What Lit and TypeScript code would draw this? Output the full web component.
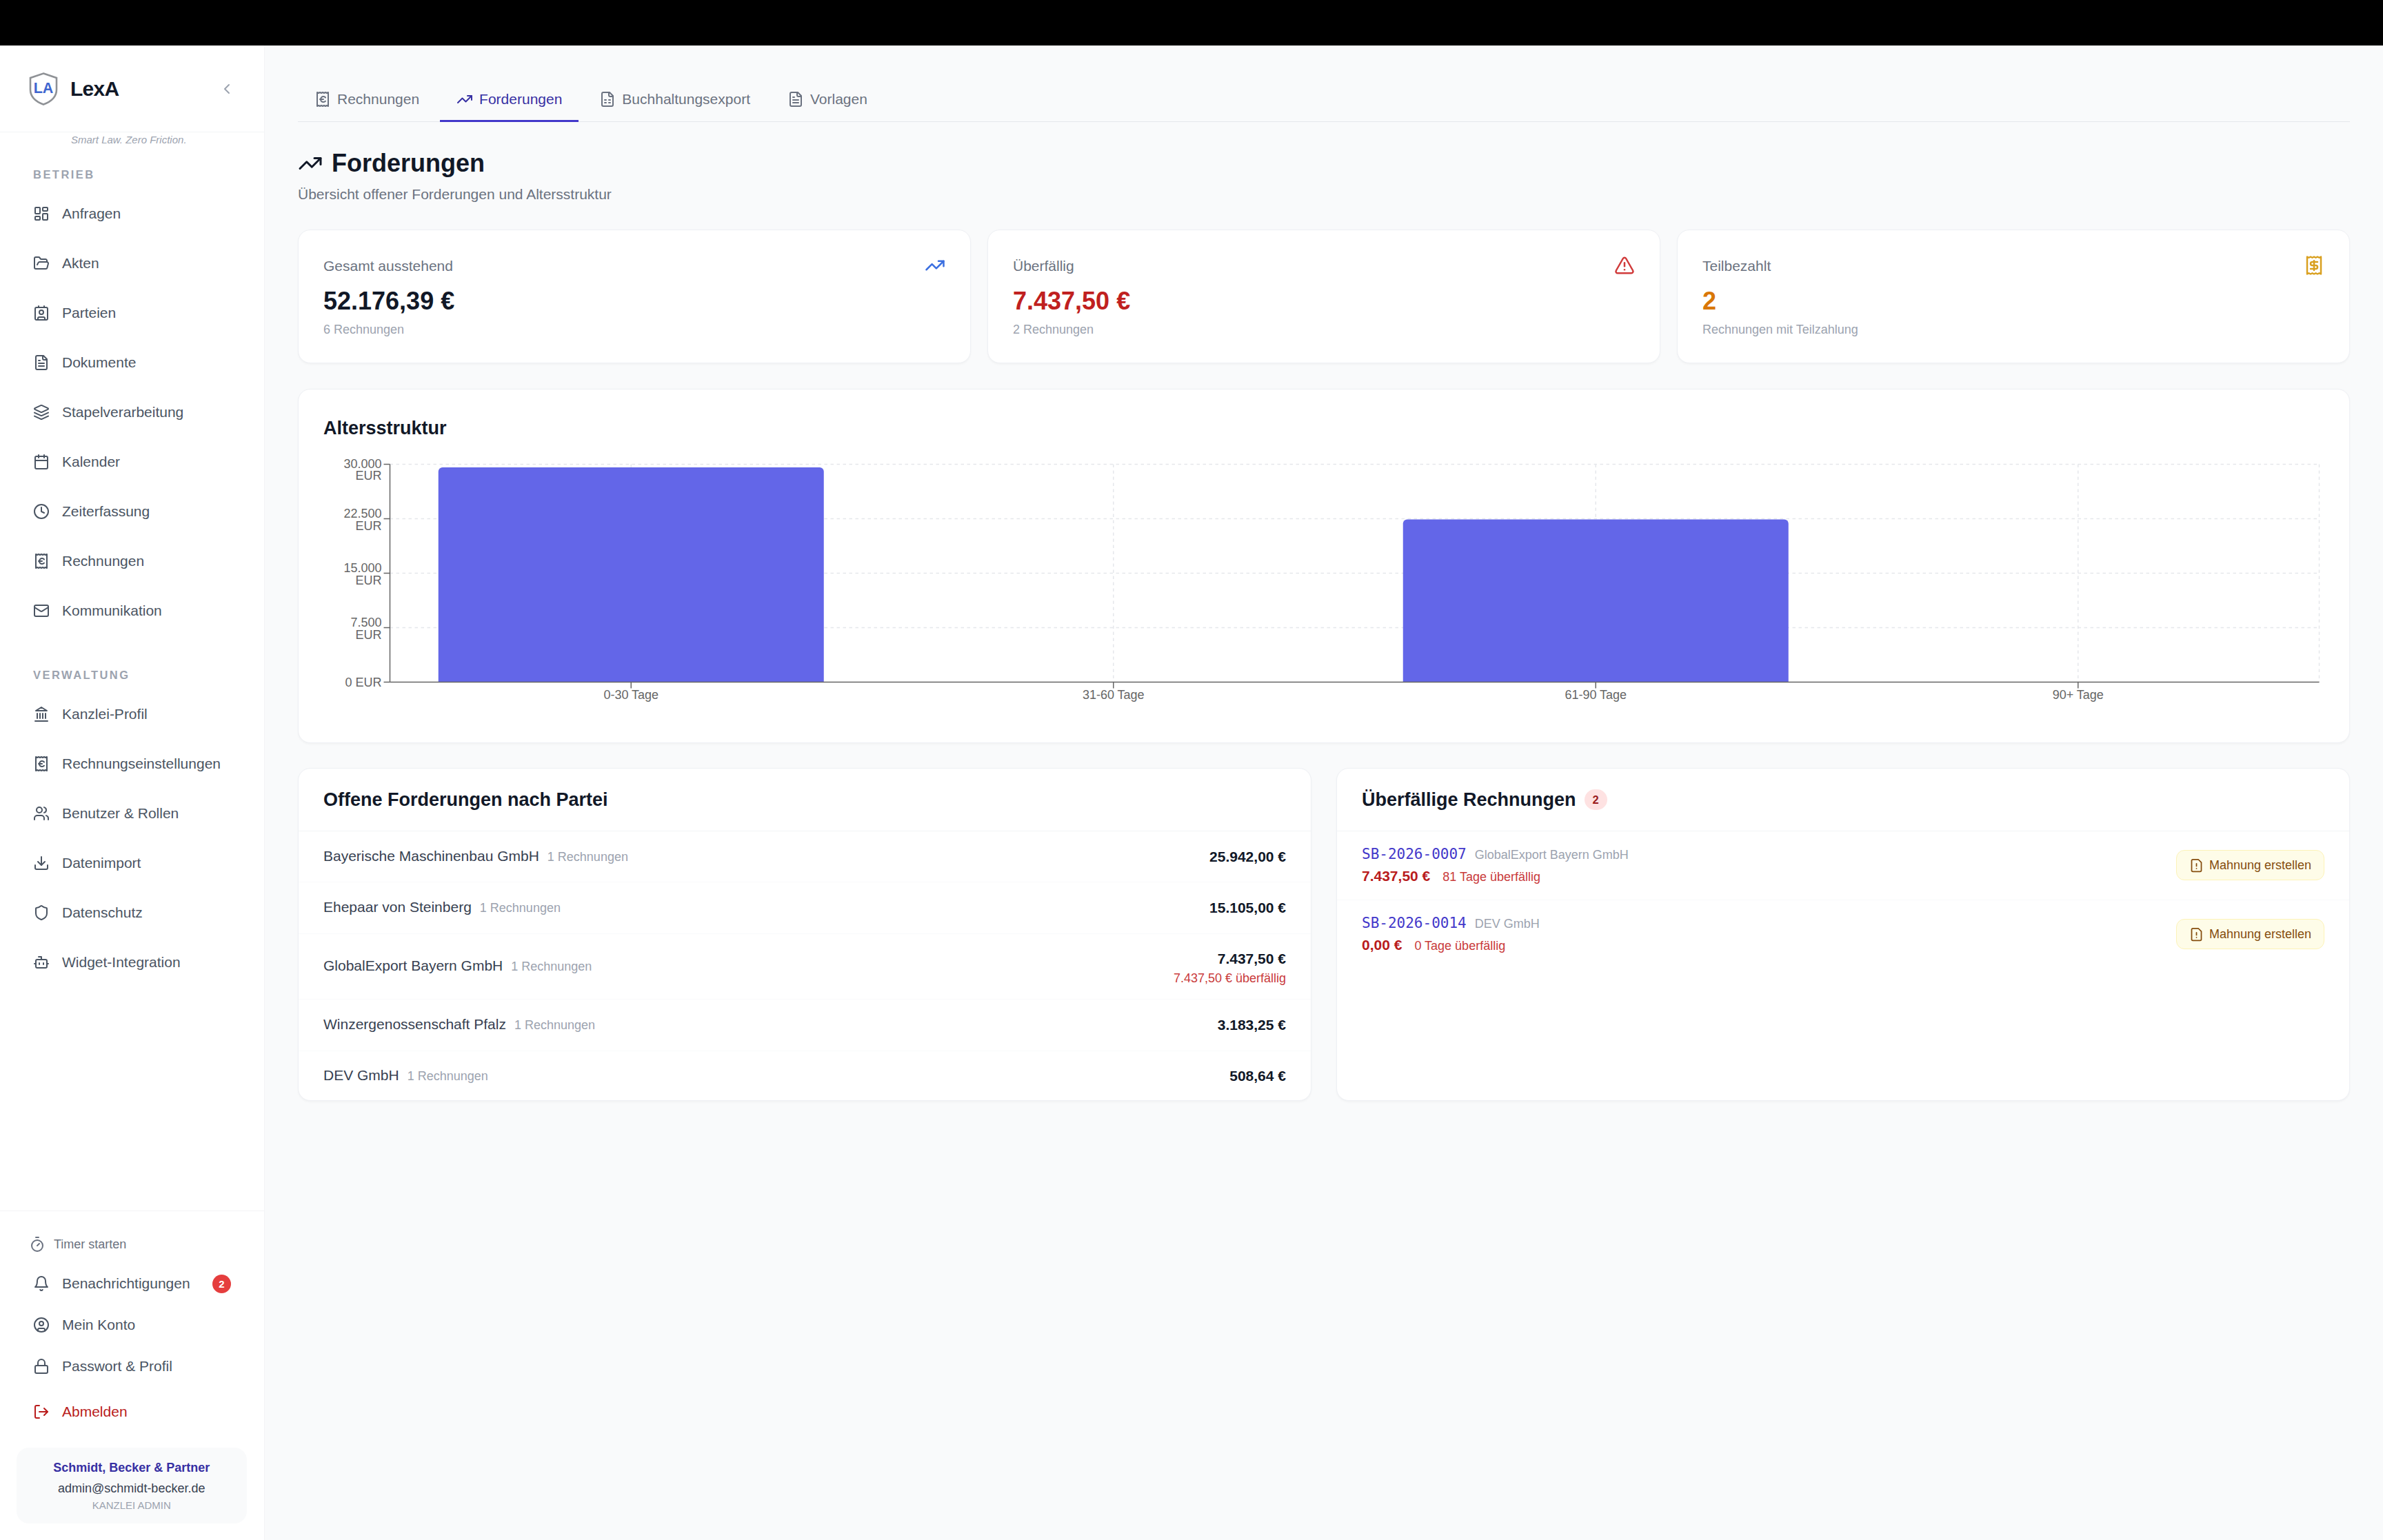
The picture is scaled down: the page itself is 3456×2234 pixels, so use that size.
import { LitElement, html, css, svg } from "lit";
import { customElement } from "lit/decorators.js";

const FILE = "M15 2H6a2 2 0 0 0-2 2v16a2 2 0 0 0 2 2h12a2 2 0 0 0 2-2V7Z";
const FOLD = "M14 2v4a2 2 0 0 0 2 2h4";
const RECEIPT = "M4 2v20l2-1 2 1 2-1 2 1 2-1 2 1 2-1 2 1V2l-2 1-2-1-2 1-2-1-2 1-2-1-2 1Z";

const ICONS: Record<string, unknown> = {
  dashboard: svg`<rect x="3" y="3" width="7" height="9" rx="1"/><rect x="14" y="3" width="7" height="5" rx="1"/><rect x="14" y="12" width="7" height="9" rx="1"/><rect x="3" y="16" width="7" height="5" rx="1"/>`,
  folder: svg`<path d="m6 14 1.5-2.9A2 2 0 0 1 9.24 10H20a2 2 0 0 1 1.94 2.5l-1.54 6a2 2 0 0 1-1.95 1.5H4a2 2 0 0 1-2-2V5a2 2 0 0 1 2-2h3.9a2 2 0 0 1 1.69.9l.81 1.2a2 2 0 0 0 1.67.9H18a2 2 0 0 1 2 2v2"/>`,
  contact: svg`<path d="M16 2v2"/><path d="M7 22v-2a2 2 0 0 1 2-2h6a2 2 0 0 1 2 2v2"/><path d="M8 2v2"/><circle cx="12" cy="11" r="3"/><rect x="3" y="4" width="18" height="18" rx="2"/>`,
  file: svg`<path d="${FILE}"/><path d="${FOLD}"/><path d="M10 9H8"/><path d="M16 13H8"/><path d="M16 17H8"/>`,
  layers: svg`<path d="m12.83 2.18a2 2 0 0 0-1.66 0L2.6 6.08a1 1 0 0 0 0 1.83l8.58 3.91a2 2 0 0 0 1.66 0l8.58-3.9a1 1 0 0 0 0-1.83Z"/><path d="m22 17.65-9.17 4.16a2 2 0 0 1-1.66 0L2 17.65"/><path d="m22 12.65-9.17 4.16a2 2 0 0 1-1.66 0L2 12.65"/>`,
  calendar: svg`<path d="M8 2v4"/><path d="M16 2v4"/><rect x="3" y="4" width="18" height="18" rx="2"/><path d="M3 10h18"/>`,
  clock: svg`<circle cx="12" cy="12" r="10"/><polyline points="12 6 12 12 16 14"/>`,
  receiptEuro: svg`<path d="${RECEIPT}"/><path d="M8 12h5"/><path d="M16 9.5a4 4 0 1 0 0 5.2"/>`,
  mail: svg`<rect x="2" y="4" width="20" height="16" rx="2"/><path d="m22 7-8.97 5.7a1.94 1.94 0 0 1-2.06 0L2 7"/>`,
  landmark: svg`<line x1="3" y1="22" x2="21" y2="22"/><line x1="6" y1="18" x2="6" y2="11"/><line x1="10" y1="18" x2="10" y2="11"/><line x1="14" y1="18" x2="14" y2="11"/><line x1="18" y1="18" x2="18" y2="11"/><polygon points="12 2 20 7 4 7"/>`,
  users: svg`<path d="M16 21v-2a4 4 0 0 0-4-4H6a4 4 0 0 0-4 4v2"/><circle cx="9" cy="7" r="4"/><path d="M22 21v-2a4 4 0 0 0-3-3.87"/><path d="M16 3.13a4 4 0 0 1 0 7.75"/>`,
  download: svg`<path d="M21 15v4a2 2 0 0 1-2 2H5a2 2 0 0 1-2-2v-4"/><polyline points="7 10 12 15 17 10"/><line x1="12" y1="15" x2="12" y2="3"/>`,
  shield: svg`<path d="M20 13c0 5-3.5 7.5-7.66 8.95a1 1 0 0 1-.67-.01C7.5 20.5 4 18 4 13V6a1 1 0 0 1 1-1c2 0 4.5-1.2 6.24-2.72a1.17 1.17 0 0 1 1.52 0C14.51 3.81 17 5 19 5a1 1 0 0 1 1 1z"/>`,
  bot: svg`<path d="M12 8V4H8"/><rect x="4" y="8" width="16" height="12" rx="2"/><path d="M2 14h2"/><path d="M20 14h2"/><path d="M15 13v2"/><path d="M9 13v2"/>`,
  bell: svg`<path d="M6 8a6 6 0 0 1 12 0c0 7 3 9 3 9H3s3-2 3-9"/><path d="M10.3 21a1.94 1.94 0 0 0 3.4 0"/>`,
  user: svg`<circle cx="12" cy="12" r="10"/><circle cx="12" cy="10" r="3"/><path d="M7 20.662V19a2 2 0 0 1 2-2h6a2 2 0 0 1 2 2v1.662"/>`,
  lock: svg`<rect x="3" y="11" width="18" height="11" rx="2"/><path d="M7 11V7a5 5 0 0 1 10 0v4"/>`,
  logout: svg`<path d="M9 21H5a2 2 0 0 1-2-2V5a2 2 0 0 1 2-2h4"/><polyline points="16 17 21 12 16 7"/><line x1="21" y1="12" x2="9" y2="12"/>`,
  timer: svg`<line x1="10" y1="2" x2="14" y2="2"/><line x1="12" y1="14" x2="15" y2="11"/><circle cx="12" cy="14" r="8"/>`,
  trend: svg`<polyline points="22 7 13.5 15.5 8.5 10.5 2 17"/><polyline points="16 7 22 7 22 13"/>`,
  alert: svg`<path d="m21.73 18-8-14a2 2 0 0 0-3.48 0l-8 14A2 2 0 0 0 4 21h16a2 2 0 0 0 1.73-3"/><path d="M12 9v4"/><path d="M12 17h.01"/>`,
  receiptDollar: svg`<path d="${RECEIPT}"/><path d="M16 8h-6a2 2 0 1 0 0 4h4a2 2 0 1 1 0 4H8"/><path d="M12 17.5v-11"/>`,
  sheet: svg`<path d="${FILE}"/><path d="${FOLD}"/><path d="M8 13h2"/><path d="M14 13h2"/><path d="M8 17h2"/><path d="M14 17h2"/>`,
  fileWarn: svg`<path d="${FILE}"/><path d="M12 9v4"/><path d="M12 17h.01"/>`,
  chevron: svg`<path d="m15 18-6-6 6-6"/>`,
};

function icon(name: string, cls = "") {
  return html`<svg class="ic ${cls}" viewBox="0 0 24 24" fill="none" stroke="currentColor" stroke-width="2" stroke-linecap="round" stroke-linejoin="round">${ICONS[name]}</svg>`;
}

const NAV1 = [
  ["dashboard", "Anfragen"], ["folder", "Akten"], ["contact", "Parteien"], ["file", "Dokumente"],
  ["layers", "Stapelverarbeitung"], ["calendar", "Kalender"], ["clock", "Zeiterfassung"],
  ["receiptEuro", "Rechnungen"], ["mail", "Kommunikation"],
];
const NAV2 = [
  ["landmark", "Kanzlei-Profil"], ["receiptEuro", "Rechnungseinstellungen"], ["users", "Benutzer & Rollen"],
  ["download", "Datenimport"], ["shield", "Datenschutz"], ["bot", "Widget-Integration"],
];
const TABS = [
  ["receiptEuro", "Rechnungen", false], ["trend", "Forderungen", true],
  ["sheet", "Buchhaltungsexport", false], ["file", "Vorlagen", false],
] as const;
const PARTIES = [
  ["Bayerische Maschinenbau GmbH", "25.942,00 €", ""],
  ["Ehepaar von Steinberg", "15.105,00 €", ""],
  ["GlobalExport Bayern GmbH", "7.437,50 €", "7.437,50 € überfällig"],
  ["Winzergenossenschaft Pfalz", "3.183,25 €", ""],
  ["DEV GmbH", "508,64 €", ""],
];
const OVERDUE = [
  ["SB-2026-0007", "GlobalExport Bayern GmbH", "7.437,50 €", "81 Tage überfällig"],
  ["SB-2026-0014", "DEV GmbH", "0,00 €", "0 Tage überfällig"],
];

function chart() {
  const L = 96.5, R = 2894.5, T = 7.5, B = 323.5;
  const band = (R - L) / 4;
  const centres = [0, 1, 2, 3].map((i) => L + band * (i + 0.5));
  const labels = ["0-30 Tage", "31-60 Tage", "61-90 Tage", "90+ Tage"];
  const ys = [T, T + 79, T + 158, T + 237];
  const yLabels = ["30.000", "22.500", "15.000", "7.500"];
  const bar = (cx: number, top: number) => {
    const w = 559, x = cx - w / 2, r = 6;
    return svg`<path class="bar" d="M${x} ${B}V${top + r}a${r} ${r} 0 0 1 ${r}-${r}H${x + w - r}a${r} ${r} 0 0 1 ${r} ${r}V${B}Z"/>`;
  };
  return html`<svg class="chart" width="100%" height="375">
    ${ys.map((y) => svg`<line class="grid" x1=${L} x2=${R} y1=${y} y2=${y}/>`)}
    ${centres.map((x) => svg`<line class="grid" x1=${x} x2=${x} y1=${T} y2=${B}/>`)}
    <line class="grid" x1=${R} x2=${R} y1=${T} y2=${B}/>
    ${bar(centres[0], 12)}
    ${bar(centres[2], 87.5)}
    <line class="axis" x1=${L} x2=${L} y1=${T} y2=${B}/>
    <line class="axis" x1=${L} x2=${R} y1=${B} y2=${B}/>
    ${[...ys, B].map((y) => svg`<line class="axis" x1=${L - 9} x2=${L} y1=${y} y2=${y}/>`)}
    ${centres.map((x) => svg`<line class="axis" x1=${x} x2=${x} y1=${B} y2=${B + 9}/>`)}
    ${ys.map((y, i) => {
      const by = i === 0 ? y + 5 : y - 1.5;
      return svg`<text class="tick end" x="84.5" y=${by}>${yLabels[i]}<tspan x="84.5" dy="17.5">EUR</tspan></text>`;
    })}
    <text class="tick end" x="84.5" y=${B + 6}>0 EUR</text>
    ${centres.map((x, i) => svg`<text class="tick mid" x=${x} y=${B + 24}>${labels[i]}</text>`)}
  </svg>`;
}

@customElement("app-root")
export class AppRoot extends LitElement {
  static styles = css`
    :host { display: block; font-family: "Liberation Sans", Arial, sans-serif; color: #111827; }
    * { box-sizing: border-box; }
    .topbar { height: 66px; background: #000; }
    .shell { display: flex; height: 2168px; }
    .ic { width: 24px; height: 24px; flex: none; display: block; }

    .side { width: 384px; flex: none; background: #fff; border-right: 1.5px solid #f3f4f6; display: flex; flex-direction: column; }
    .brand { height: 126px; flex: none; display: flex; align-items: center; padding: 0 42.5px 0 42px; border-bottom: 1.5px solid #f3f4f6; }
    .logo { width: 42px; height: 48px; flex: none; display: block; }
    .logo path { fill: #fff; stroke: #8f9296; stroke-width: 2.6; }
    .logo text { font: bold 21.5px "Liberation Sans", Arial, sans-serif; fill: #3f66cf; text-anchor: middle; }
    .brand-name { margin-left: 18px; font-size: 30px; font-weight: 700; letter-spacing: -0.75px; flex: 1; }
    .collapse { color: #9ca3af; }
    .tag { padding-left: 103px; font-size: 15px; line-height: 22.5px; font-style: italic; color: #9ca3af; }
    .sec { padding-left: 48px; font-size: 16.5px; line-height: 24.75px; font-weight: 700; letter-spacing: 2.475px; color: #9ca3af; margin-bottom: 8.6px; }
    .sec.first { margin-top: 26px; }
    .sec.second { margin-top: 45px; }
    .nav { display: flex; align-items: center; gap: 18px; height: 72px; padding: 0 24px; margin: 0 24px; font-size: 21px; color: #4b5563; }
    .foot { margin-top: auto; border-top: 1.5px solid #f3f4f6; padding-top: 30px; padding-bottom: 24px; }
    .timer { display: flex; align-items: center; gap: 12px; height: 36px; padding-left: 42px; margin-bottom: 9px; font-size: 18px; color: #6b7280; }
    .nav.tight { height: 60px; }
    .nav.logout { height: 60px; margin-top: 6px; color: #b91c1c; }
    .grow { flex: 1; }
    .count { width: 27px; height: 27px; border-radius: 50%; background: #e53e3e; color: #fff; font-size: 15px; font-weight: 700; display: flex; align-items: center; justify-content: center; }
    .who { margin: 22px 25.5px 0 24px; height: 110px; padding-top: 15.5px; border-radius: 18px; background: #f9fafb; text-align: center; }
    .firm { font-size: 18px; line-height: 27px; font-weight: 700; color: #3730a3; }
    .mail { font-size: 18px; line-height: 27px; color: #374151; margin-top: 3px; }
    .role { font-size: 15px; line-height: 22.5px; color: #9ca3af; }

    .main { flex: 1; min-width: 0; background: #f9fafb; padding: 44px 48px 0; }
    .tabs { display: flex; gap: 6px; height: 67px; border-bottom: 1.5px solid #e5e7eb; }
    .tab { display: flex; align-items: center; gap: 9px; height: 67px; padding: 3px 24px 0; border-bottom: 3px solid transparent; font-size: 21px; color: #6b7280; }
    .tab.on { color: #3730a3; border-bottom-color: #4338ca; }
    .title { display: flex; align-items: center; gap: 13px; margin: 36px 0 0; font-size: 36px; line-height: 48px; font-weight: 700; }
    .title .ic { width: 36px; height: 36px; }
    .subtitle { margin: 5px 0 0; font-size: 21px; line-height: 31.5px; color: #6b7280; }

    .card { background: #fff; border: 1.5px solid #eef0f4; border-radius: 18px; box-shadow: 0 1.5px 3px rgba(0,0,0,.03); }
    .stats { display: grid; grid-template-columns: repeat(3, 1fr); gap: 24px; margin-top: 35px; }
    .stat { padding: 36px 36px 33.5px; }
    .stat-top { display: flex; justify-content: space-between; align-items: center; }
    .stat-label { font-size: 21px; line-height: 31.5px; color: #6b7280; }
    .stat-top .ic { width: 30px; height: 30px; }
    .blue { color: #3b6fe0; }
    .red { color: #d03a3a; }
    .amber { color: #d9a020; }
    .stat-value { margin-top: 12px; font-size: 36px; line-height: 48px; font-weight: 700; }
    .v-red { color: #c02020; }
    .v-amber { color: #d97706; }
    .stat-sub { margin-top: 4.2px; font-size: 18px; line-height: 27px; color: #9ca3af; }

    .chart-card { margin-top: 37px; padding: 36px; }
    .h2 { margin: 0; font-size: 27px; line-height: 40.5px; font-weight: 700; }
    .chart { display: block; margin-top: 25px; overflow: hidden; }
    .grid { stroke: #e5e7eb; stroke-width: 1.5; stroke-dasharray: 4.5 4.5; }
    .axis { stroke: #666; stroke-width: 1.5; }
    .bar { fill: #6366e8; }
    .tick { font-size: 18px; fill: #666; }
    .end { text-anchor: end; }
    .mid { text-anchor: middle; }

    .cols { display: grid; grid-template-columns: 1fr 1fr; gap: 36px; margin-top: 36px; }
    .panel-head { display: flex; align-items: center; gap: 12px; padding: 25px 36px 24px; border-bottom: 1.5px solid #f3f4f6; }
    .pill { min-width: 33px; height: 30px; padding: 0 10px; border-radius: 15px; background: #fee2e2; color: #991b1b; font-size: 16.5px; font-weight: 700; display: flex; align-items: center; justify-content: center; }
    .row { display: flex; justify-content: space-between; align-items: center; padding: 20px 36px; border-bottom: 1.5px solid #f9fafb; }
    .row:last-child { border-bottom: none; padding-top: 19px; padding-bottom: 19px; }
    .pname { font-size: 21px; line-height: 31.5px; color: #374151; }
    .pmeta { margin-left: 12px; font-size: 18px; color: #9ca3af; }
    .amt { text-align: right; font-size: 21px; line-height: 31.5px; font-weight: 700; }
    .amt-sub { text-align: right; margin-top: 1px; margin-bottom: -2px; font-size: 18px; line-height: 24px; color: #c93a3a; }
    .orow { display: flex; justify-content: space-between; align-items: center; padding: 18px 36px; border-bottom: 1.5px solid #f9fafb; }
    .orow:last-child { border-bottom: none; }
    .oline { line-height: 31.5px; height: 31.5px; }
    .ono { font-family: "DejaVu Sans Mono", "Liberation Mono", monospace; font-size: 21px; color: #4338ca; }
    .ocl { margin-left: 12px; font-size: 18px; color: #9ca3af; }
    .oamt { font-size: 21px; font-weight: 700; color: #b91c1c; }
    .oday { margin-left: 18px; font-size: 18px; color: #c93a3a; }
    .btn { display: flex; align-items: center; gap: 7.5px; height: 44px; padding: 0 18px; border: 1.5px solid #fdf3b8; border-radius: 12px; background: #fefce8; color: #854d0e; font-size: 18px; }
    .btn .ic { width: 21px; height: 21px; }
  `;

  private nav(i: string, t: string, extra = "") {
    return html`<div class="nav ${extra}">${icon(i)}<span>${t}</span></div>`;
  }

  private stat(label: string, ic: string, icCls: string, value: string, vCls: string, sub: string) {
    return html`<div class="card stat">
      <div class="stat-top"><span class="stat-label">${label}</span>${icon(ic, icCls)}</div>
      <div class="stat-value ${vCls}">${value}</div>
      <div class="stat-sub">${sub}</div>
    </div>`;
  }

  render() {
    return html`
      <div class="topbar"></div>
      <div class="shell">
        <aside class="side">
          <div class="brand">
            <svg class="logo" viewBox="0 0 42 48">
              <path d="M21 1.5 40 8v17c0 11-8 17.5-19 21.5C10 42.5 2 36 2 25V8Z"/>
              <text x="21" y="29.5">LA</text>
            </svg>
            <span class="brand-name">LexA</span>
            ${icon("chevron", "collapse")}
          </div>
          <div class="tag">Smart Law. Zero Friction.</div>
          <div class="sec first">BETRIEB</div>
          ${NAV1.map(([i, t]) => this.nav(i, t))}
          <div class="sec second">VERWALTUNG</div>
          ${NAV2.map(([i, t]) => this.nav(i, t))}
          <div class="foot">
            <div class="timer">${icon("timer")}<span>Timer starten</span></div>
            <div class="nav tight">${icon("bell")}<span class="grow">Benachrichtigungen</span><span class="count">2</span></div>
            ${this.nav("user", "Mein Konto", "tight")}
            ${this.nav("lock", "Passwort & Profil", "tight")}
            ${this.nav("logout", "Abmelden", "logout")}
            <div class="who">
              <div class="firm">Schmidt, Becker &amp; Partner</div>
              <div class="mail">admin@schmidt-becker.de</div>
              <div class="role">KANZLEI ADMIN</div>
            </div>
          </div>
        </aside>
        <main class="main">
          <nav class="tabs">
            ${TABS.map(([i, t, on]) => html`<div class="tab ${on ? "on" : ""}">${icon(i)}<span>${t}</span></div>`)}
          </nav>
          <h1 class="title">${icon("trend")}<span>Forderungen</span></h1>
          <p class="subtitle">Übersicht offener Forderungen und Altersstruktur</p>
          <section class="stats">
            ${this.stat("Gesamt ausstehend", "trend", "blue", "52.176,39 €", "", "6 Rechnungen")}
            ${this.stat("Überfällig", "alert", "red", "7.437,50 €", "v-red", "2 Rechnungen")}
            ${this.stat("Teilbezahlt", "receiptDollar", "amber", "2", "v-amber", "Rechnungen mit Teilzahlung")}
          </section>
          <section class="card chart-card">
            <h2 class="h2">Altersstruktur</h2>
            ${chart()}
          </section>
          <section class="cols">
            <div class="card">
              <div class="panel-head"><h2 class="h2">Offene Forderungen nach Partei</h2></div>
              ${PARTIES.map(([n, a, s]) => html`<div class="row">
                <div class="pname">${n}<span class="pmeta">1 Rechnungen</span></div>
                <div>
                  <div class="amt">${a}</div>
                  ${s ? html`<div class="amt-sub">${s}</div>` : ""}
                </div>
              </div>`)}
            </div>
            <div class="card">
              <div class="panel-head"><h2 class="h2">Überfällige Rechnungen</h2><span class="pill">2</span></div>
              ${OVERDUE.map(([no, cl, a, d]) => html`<div class="orow">
                <div>
                  <div class="oline"><span class="ono">${no}</span><span class="ocl">${cl}</span></div>
                  <div class="oline"><span class="oamt">${a}</span><span class="oday">${d}</span></div>
                </div>
                <div class="btn">${icon("fileWarn")}<span>Mahnung erstellen</span></div>
              </div>`)}
            </div>
          </section>
        </main>
      </div>
    `;
  }
}
